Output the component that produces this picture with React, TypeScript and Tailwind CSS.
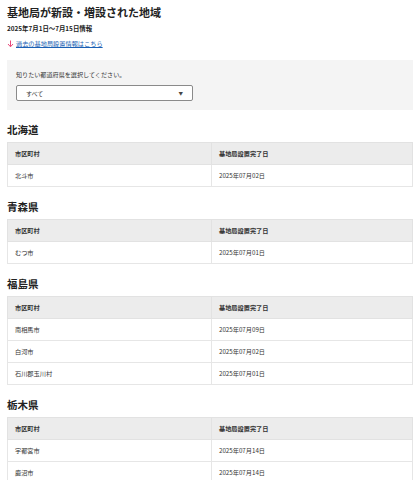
import React from 'react';

type Row = { city: string; date: string };
type Pref = { name: string; rows: Row[] };

const prefs: Pref[] = [
  { name: '北海道', rows: [{ city: '北斗市', date: '2025年07月02日' }] },
  { name: '青森県', rows: [{ city: 'むつ市', date: '2025年07月01日' }] },
  {
    name: '福島県',
    rows: [
      { city: '南相馬市', date: '2025年07月09日' },
      { city: '白河市', date: '2025年07月02日' },
      { city: '石川郡玉川村', date: '2025年07月01日' },
    ],
  },
  {
    name: '栃木県',
    rows: [
      { city: '宇都宮市', date: '2025年07月14日' },
      { city: '鹿沼市', date: '2025年07月14日' },
    ],
  },
];

const PrefTable: React.FC<{ pref: Pref }> = ({ pref }) => {
  return (
    <section className="mt-[13px]">
      <h2 className="text-[10.5px] font-bold leading-[14px] text-[#222]">{pref.name}</h2>
      <table className="mt-[5px] w-full table-fixed border-collapse text-[6.2px] text-[#333]">
        <thead>
          <tr className="h-[22px] bg-[#ececec]">
            <th className="w-[204px] border border-[#e2e2e2] pl-[7px] text-left font-bold">市区町村</th>
            <th className="border border-[#e2e2e2] pl-[7px] text-left font-bold">基地局設置完了日</th>
          </tr>
        </thead>
        <tbody>
          {pref.rows.map((r) => (
            <tr key={r.city} className="h-[22px] bg-white">
              <td className="border border-[#e6e6e6] pl-[7px]">{r.city}</td>
              <td className="border border-[#e6e6e6] pl-[7px]">{r.date}</td>
            </tr>
          ))}
        </tbody>
      </table>
    </section>
  );
};

export default function App() {
  return (
    <div
      className="h-[480px] overflow-hidden bg-white px-[7px] pt-[5px] text-[#222]"
      style={{ fontFamily: '"Noto Sans CJK JP", "Noto Sans", sans-serif' }}
    >
      <h1 className="text-[11px] font-bold leading-[14px]">基地局が新設・増設された地域</h1>
      <p className="mt-[5px] text-[6.4px] font-bold leading-[10px]">2025年7月1日〜7月15日情報</p>
      <a href="#" className="mt-[5px] flex items-center gap-[2px] text-[6.2px] leading-[10px] text-[#1a5fb4] underline">
        <svg width="7" height="8" viewBox="0 0 7 8" className="shrink-0">
          <path d="M3.5 0.5v6M1 4l2.5 2.8L6 4" fill="none" stroke="#e8487a" strokeWidth="1" />
        </svg>
        過去の基地局設置情報はこちら
      </a>
      <div className="mt-[11px] bg-[#f4f4f4] px-[9px] pb-[9px] pt-[10px]">
        <p className="text-[6.1px] leading-[10px] text-[#333]">知りたい都道府県を選択してください。</p>
        <div className="mt-[5px] flex h-[16px] w-[177px] items-center justify-between rounded-[2px] border border-[#8a8a8a] bg-white pl-[9px] pr-[9px] text-[6px] text-[#333]">
          <span>すべて</span>
          <span className="text-[4.5px] text-[#444]">▼</span>
        </div>
      </div>
      <div className="mt-[3px]">
        {prefs.map((p) => (
          <PrefTable key={p.name} pref={p} />
        ))}
      </div>
    </div>
  );
}
